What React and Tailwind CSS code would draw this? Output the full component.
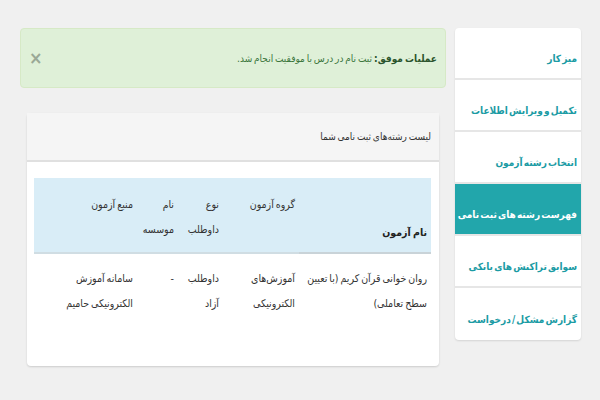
const menu = [
  { label: 'میز کار' },
  { label: 'تکمیل و ویرایش اطلاعات' },
  { label: 'انتخاب رشته آزمون' },
  { label: 'فهرست رشته های ثبت نامی', active: true },
  { label: 'سوابق تراکنش های بانکی' },
  { label: 'گزارش مشکل / درخواست' },
]

function Sidebar() {
  return (
    <ul className="w-[126px] shrink-0 self-start bg-white rounded-sm shadow-[0_1px_2px_rgba(0,0,0,0.12)] overflow-hidden">
      {menu.map((item, i) => (
        <li
          key={i}
          className={
            'h-[52px] flex items-center pr-1 pt-[10px] text-[10px] font-bold whitespace-nowrap [word-spacing:-2px] border-b-2 border-[#e6e6e6] last:border-b-0 ' +
            (item.active ? 'bg-[#22a6ab] text-white' : 'text-[#1b9ba4]')
          }
        >
          {item.label}
        </li>
      ))}
    </ul>
  )
}

function Alert() {
  return (
    <div className="h-[60px] bg-[#dff0d8] border border-[#d6e9c6] rounded flex items-center justify-between pr-2 pl-2 text-[10px] text-[#3c763d] [word-spacing:-1px]">
      <p>
        <span className="font-bold text-[#2b542c]">عملیات موفق: </span>
        ثبت نام در درس با موفقیت انجام شد.
      </p>
      <span className="text-[18px] font-bold text-[#9aa896] leading-none">×</span>
    </div>
  )
}

function Panel() {
  return (
    <div className="mx-[7px] mt-[25px] bg-white rounded-sm shadow-[0_1px_2px_rgba(0,0,0,0.15)]">
      <div className="h-[49px] bg-[#f5f5f5] border-b-2 border-[#e0e0e0] flex items-center pr-2 text-[10px] text-[#333] [word-spacing:-1px]">
        لیست رشته‌های ثبت نامی شما
      </div>
      <div className="pt-[16px] pr-[8px] pl-[7px] pb-[50px]">
        <table className="w-full text-[10.5px] text-[#333] leading-[25px] border-collapse [word-spacing:-1px]">
          <thead>
            <tr className="h-[75px] bg-[#d9edf7] border-b-2 border-[#d0dde3]">
              <th className="w-[132px] align-bottom pr-1 pb-[7px] text-right font-bold text-[#222] border-b-2 border-[#c9d3d8]">نام آزمون</th>
              <th className="w-[76px] align-top pr-1 pt-[14px] text-right font-normal">گروه آزمون</th>
              <th className="w-[45px] align-top pr-1 pt-[14px] text-right font-normal">نوع<br />داوطلب</th>
              <th className="w-[41px] align-top pr-1 pt-[14px] text-right font-normal">نام<br />موسسه</th>
              <th className="align-top pr-1 pt-[14px] text-right font-normal">منبع آزمون</th>
            </tr>
          </thead>
          <tbody>
            <tr>
              <td className="align-top pr-1 pt-[12px]">روان خوانی قرآن کریم (با تعیین سطح تعاملی)</td>
              <td className="align-top pr-1 pt-[12px]">آموزش‌های الکترونیکی</td>
              <td className="align-top pr-1 pt-[12px]">داوطلب آزاد</td>
              <td className="align-top pr-1 pt-[12px]">-</td>
              <td className="align-top pr-1 pt-[12px]">سامانه آموزش الکترونیکی حامیم</td>
            </tr>
          </tbody>
        </table>
      </div>
    </div>
  )
}

export default function App() {
  return (
    <div
      dir="rtl"
      className="w-[600px] h-[400px] bg-[#f0f0f0] flex gap-[9px] pt-[28px] pr-[19px] pl-[20px]"
      style={{ fontFamily: '"DejaVu Sans Condensed", "DejaVu Sans", sans-serif' }}
    >
      <Sidebar />
      <div className="flex-1">
        <Alert />
        <Panel />
      </div>
    </div>
  )
}
